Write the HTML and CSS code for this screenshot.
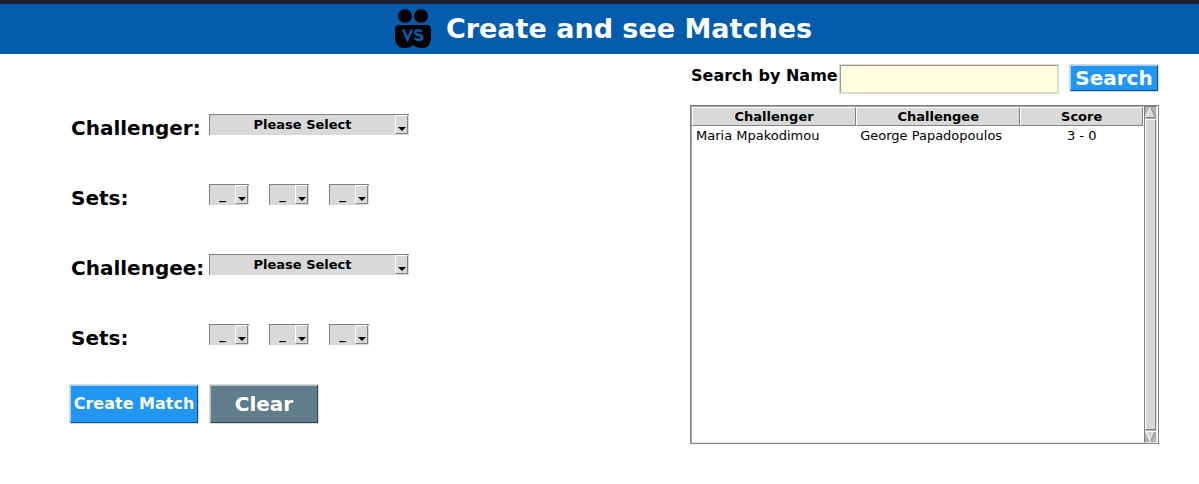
FILE: index.html
```html
<!DOCTYPE html>
<html lang="en">
<head>
<meta charset="utf-8">
<meta name="viewport" content="width=device-width, initial-scale=1">
<title>Create and see Matches</title>
<link rel="stylesheet" href="styles.css">
</head>
<body>
<header class="banner">
  <svg class="logo" width="36" height="40" viewBox="0 0 36 40" aria-hidden="true">
    <circle cx="10" cy="7" r="7"/>
    <circle cx="26" cy="7" r="7"/>
    <path d="M4 16H32Q36 16 36 20V29Q36 39 26 39Q21 39 18 36Q15 39 10 39Q0 39 0 29V20Q0 16 4 16Z"/>
    <path class="logo-mark" d="M8 20.500L12.500 30.500L17 20.500M27 23Q25.500 21.300 23.500 21.300Q20.300 21.300 20.300 23.500Q20.300 25.400 23.500 26Q27.200 26.600 27.200 28.500Q27.200 30.900 23.700 30.900Q21 30.900 19.500 29"/>
  </svg>
  <h1 class="title">Create and see Matches</h1>
</header>
<main class="content">
  <form class="match-form">
    <div class="row">
      <label class="row-label" for="challenger">Challenger:</label>
      <span class="picker picker-wide"><select id="challenger"><option>Please Select</option></select><span class="arrow"></span></span>
    </div>
    <div class="row" role="group" aria-labelledby="sets-challenger">
      <span class="row-label" id="sets-challenger">Sets:</span>
      <div class="sets">
        <span class="picker"><select aria-label="Challenger set 1"><option>_</option></select><span class="arrow"></span></span>
        <span class="picker"><select aria-label="Challenger set 2"><option>_</option></select><span class="arrow"></span></span>
        <span class="picker"><select aria-label="Challenger set 3"><option>_</option></select><span class="arrow"></span></span>
      </div>
    </div>
    <div class="row">
      <label class="row-label" for="challengee">Challengee:</label>
      <span class="picker picker-wide"><select id="challengee"><option>Please Select</option></select><span class="arrow"></span></span>
    </div>
    <div class="row row-last" role="group" aria-labelledby="sets-challengee">
      <span class="row-label" id="sets-challengee">Sets:</span>
      <div class="sets">
        <span class="picker"><select aria-label="Challengee set 1"><option>_</option></select><span class="arrow"></span></span>
        <span class="picker"><select aria-label="Challengee set 2"><option>_</option></select><span class="arrow"></span></span>
        <span class="picker"><select aria-label="Challengee set 3"><option>_</option></select><span class="arrow"></span></span>
      </div>
    </div>
    <div class="actions">
      <button class="btn btn-create" type="button">Create Match</button>
      <button class="btn btn-clear" type="button">Clear</button>
    </div>
  </form>
  <section class="results">
    <form class="search">
      <label class="search-label" for="search">Search by Name</label>
      <input class="search-input" id="search" type="text">
      <button class="btn btn-search" type="button">Search</button>
    </form>
    <div class="list">
      <div class="list-body">
        <table class="matches">
          <thead><tr><th class="col-name">Challenger</th><th class="col-name">Challengee</th><th>Score</th></tr></thead>
          <tbody><tr><td>Maria Mpakodimou</td><td>George Papadopoulos</td><td class="score">3 - 0</td></tr></tbody>
        </table>
      </div>
      <div class="scrollbar" aria-hidden="true">
        <svg width="11" height="11" viewBox="0 0 11 11"><path fill="#d9d9d9" d="M5.500 0L11 11H0Z"/><path fill="none" stroke="#828282" d="M5.500 0L10.500 10.500H0"/><path fill="none" stroke="#fff" d="M5.500 0L.5 10.500"/></svg>
        <div class="thumb"></div>
        <svg width="11" height="11" viewBox="0 0 11 11"><path fill="#d9d9d9" d="M0 0H11L5.500 11Z"/><path fill="none" stroke="#828282" d="M10.500 0L5.500 10.500"/><path fill="none" stroke="#fff" d="M11 .5H.5L5.500 10.500"/></svg>
      </div>
    </div>
  </section>
</main>
</body>
</html>
```
FILE: styles.css
```css
* { box-sizing: border-box; }

body {
  margin: 0;
  background: #fff;
  color: #000;
  font-family: "DejaVu Sans", sans-serif;
}

.banner {
  display: flex;
  justify-content: center;
  gap: 15px;
  height: 54px;
  padding-top: 5px;
  padding-left: 8px;
  border-top: 4px solid #1f202b;
  background: #045cad;
}

.logo-mark { fill: none; stroke: #045cad; stroke-width: 2.500; }

.title {
  margin: 0;
  color: #fff;
  font-size: 27px;
  line-height: 40px;
}

.content {
  display: grid;
  grid-template-columns: minmax(340px, 621fr) minmax(420px, 469fr);
  padding: 10px 40px 40px 69px;
}

.match-form { padding-top: 50px; }

.row {
  display: grid;
  grid-template-columns: 140px 1fr;
  height: 70px;
}

.row-last { height: 60px; }

.row-label {
  padding: 2px;
  font-size: 20px;
  font-weight: bold;
  line-height: 24px;
}

.sets { display: flex; gap: 20px; }

.picker {
  position: relative;
  width: 40px;
  height: 21px;
}

.picker-wide { width: 200px; }

.picker select {
  appearance: none;
  display: block;
  width: 100%;
  height: 21px;
  margin: 0;
  padding: 0 14px 0 0;
  border: 1px solid #828282;
  border-width: 1px 0 0 1px;
  border-radius: 0;
  background: #d9d9d9;
  color: #000;
  font: bold 13px/20px "DejaVu Sans", sans-serif;
  text-align: center;
  text-align-last: center;
}

.arrow {
  position: absolute;
  top: 1px;
  right: 1px;
  width: 13px;
  height: 19px;
  border: 1px solid;
  border-color: #fff #828282 #828282 #fff;
  background: #d9d9d9;
  pointer-events: none;
}

.arrow::after {
  content: "";
  position: absolute;
  left: 2px;
  bottom: 2px;
  border: 4px solid transparent;
  border-top-color: #000;
  border-bottom: 0;
}

.actions {
  display: flex;
  gap: 10px;
}

.btn {
  padding: 0;
  border: 1px solid;
  border-color: #a0d0fa #105090 #105090 #a0d0fa;
  border-radius: 0;
  outline: 1px solid #d9d9d9;
  background: #2196f3;
  color: #fff;
  font: bold 20px/24px "DejaVu Sans", sans-serif;
}

.btn-create {
  width: 128px;
  height: 38px;
  margin: 1px;
  font-size: 16px;
}

.btn-clear {
  width: 108px;
  height: 38px;
  margin: 1px;
  border-color: #b0bec5 #37474f #37474f #b0bec5;
  background: #607d8b;
}

.search {
  display: flex;
  align-items: flex-start;
  height: 41px;
}

.search-label {
  width: 149px;
  padding-left: 1px;
  font-size: 16px;
  font-weight: bold;
  line-height: 24px;
  white-space: nowrap;
}

.search-input {
  flex: 1;
  min-width: 0;
  height: 28px;
  margin: 1px 11px 1px 1px;
  padding: 0 4px;
  border: 1px solid;
  border-color: #99998a #e0e0c8 #e0e0c8 #99998a;
  border-radius: 0;
  outline: 1px solid #d9d9d9;
  background: #ffffe0;
  font: 16px "DejaVu Sans", sans-serif;
}

.btn-search {
  width: 88px;
  height: 26px;
  margin: 1px;
}

.list {
  display: flex;
  min-height: 339px;
  border: 1px solid #828282;
}

.list-body {
  flex: 1;
  border: 1px solid;
  border-color: #a0a0a0 #fff #e6e6e6 #a0a0a0;
}

.matches {
  width: 100%;
  border-collapse: separate;
  border-spacing: 0;
  table-layout: fixed;
  font-size: 13px;
  line-height: 17px;
}

.matches th {
  padding: 0;
  border: 1px solid;
  border-color: #fff #828282 #828282 #fff;
  background: #d9d9d9;
}

.col-name { width: 36.400%; }

.matches td {
  padding: 0 4px;
  line-height: 20px;
  white-space: nowrap;
}

.matches .score { text-align: center; }

.scrollbar {
  display: flex;
  flex-direction: column;
  gap: 1px;
  width: 13px;
  margin-right: 1px;
  border: 1px solid;
  border-color: #828282 #e6e6e6 #e6e6e6 #828282;
  background: #b3b3b3;
}

.thumb {
  flex: 1;
  border: 1px solid;
  border-color: #fff #828282 #828282 #fff;
  background: #d9d9d9;
}
```
